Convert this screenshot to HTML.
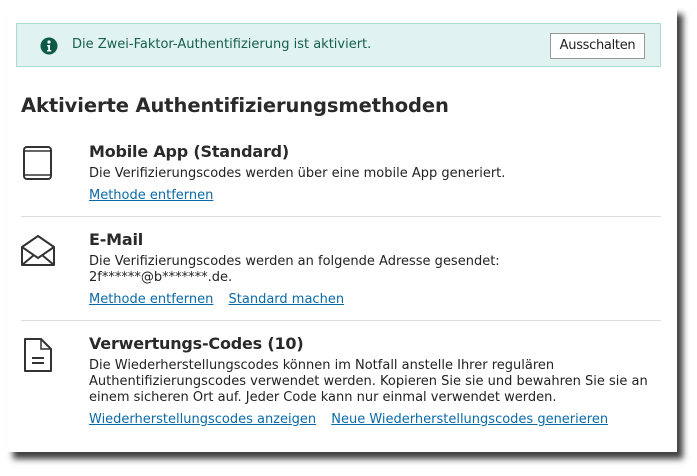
<!DOCTYPE html>
<html><head><meta charset="utf-8"><style>
body{margin:0;width:697px;height:476px;background:#fff;font-family:"DejaVu Sans",Verdana,sans-serif;color:#222;overflow:hidden;position:relative}
.card{position:absolute;left:7px;top:7px;width:670px;height:445px;background:#fff;box-shadow:6px 7px 6px rgba(0,0,0,.75)}
.alert{position:absolute;left:16px;top:23px;width:643px;height:42px;background:#e1f3f0;border:1px solid #a9dccd}
.alert .t{position:absolute;left:55px;top:13px;font-size:13px;color:#16604f}
.btn{position:absolute;left:533px;top:9px;width:93px;height:24px;border:1px solid #999;background:#fff;font-size:13px;text-align:center;line-height:24px;letter-spacing:-.3px;color:#222}
h1{position:absolute;left:21px;top:94px;margin:0;font-size:19.5px;font-weight:bold;letter-spacing:-.1px;color:#2a2a2a}
.it{position:absolute;left:89px;font-size:13px;line-height:16px}
.it b{display:block;font-size:16px;margin-bottom:6px;letter-spacing:-.2px;color:#2a2a2a}
a{color:#0a6aa6;text-decoration:underline;margin-right:11px}
.lk{margin-top:6px}
.hr{position:absolute;left:21px;width:640px;height:1px;background:#ddd}
svg{position:absolute}
</style></head><body>
<div class="card"></div>
<div class="alert">
<svg style="left:23px;top:13px" width="18" height="18" viewBox="0 0 18 18"><circle cx="9" cy="9" r="8.5" fill="#0d5a49"/><circle cx="9" cy="5" r="1.6" fill="#fff"/><path d="M7 8h3v5h1.2v1.5H7V13h1.2V9.5H7z" fill="#fff"/></svg>
<div class="t">Die Zwei-Faktor-Authentifizierung ist aktiviert.</div>
<div class="btn">Ausschalten</div>
</div>
<h1>Aktivierte Authentifizierungsmethoden</h1>
<svg style="left:22px;top:145px" width="32" height="36" viewBox="0 0 32 36"><rect x="2" y="2" width="27" height="32" rx="3" fill="none" stroke="#333" stroke-width="2"/><line x1="2" y1="6" x2="29" y2="6" stroke="#333" stroke-width="1.5"/><line x1="2" y1="30" x2="29" y2="30" stroke="#333" stroke-width="1.5"/></svg>
<div class="it" style="top:144px"><b>Mobile App (Standard)</b>Die Verifizierungscodes werden über eine mobile App generiert.<div class="lk"><a>Methode entfernen</a></div></div>
<div class="hr" style="top:216px"></div>
<svg style="left:20px;top:234px" width="36" height="34" viewBox="0 0 36 34"><path d="M2 13 L18 2 L34 13 V31 H2 Z" fill="none" stroke="#333" stroke-width="2" stroke-linejoin="round"/><path d="M2 13 L18 24 L34 13 M2 31 L14 21 M34 31 L22 21" fill="none" stroke="#333" stroke-width="2"/></svg>
<div class="it" style="top:232px"><b>E-Mail</b>Die Verifizierungscodes werden an folgende Adresse gesendet:<br>2f******@b*******.de.<div class="lk"><a>Methode entfernen</a> <a>Standard machen</a></div></div>
<div class="hr" style="top:320px"></div>
<svg style="left:22px;top:337px" width="32" height="36" viewBox="0 0 32 36"><path d="M3 2 H19 L29 12 V34 H3 Z" fill="none" stroke="#333" stroke-width="2" stroke-linejoin="round"/><path d="M19 2 V12 H29" fill="none" stroke="#333" stroke-width="1.5"/><path d="M10 21 H22 M10 26 H22" stroke="#333" stroke-width="2"/></svg>
<div class="it" style="top:336px"><b>Verwertungs-Codes (10)</b>Die Wiederherstellungscodes können im Notfall anstelle Ihrer regulären<br>Authentifizierungscodes verwendet werden. Kopieren Sie sie und bewahren Sie sie an<br>einem sicheren Ort auf. Jeder Code kann nur einmal verwendet werden.<div class="lk"><a>Wiederherstellungscodes anzeigen</a> <a>Neue Wiederherstellungscodes generieren</a></div></div>
</body></html>
